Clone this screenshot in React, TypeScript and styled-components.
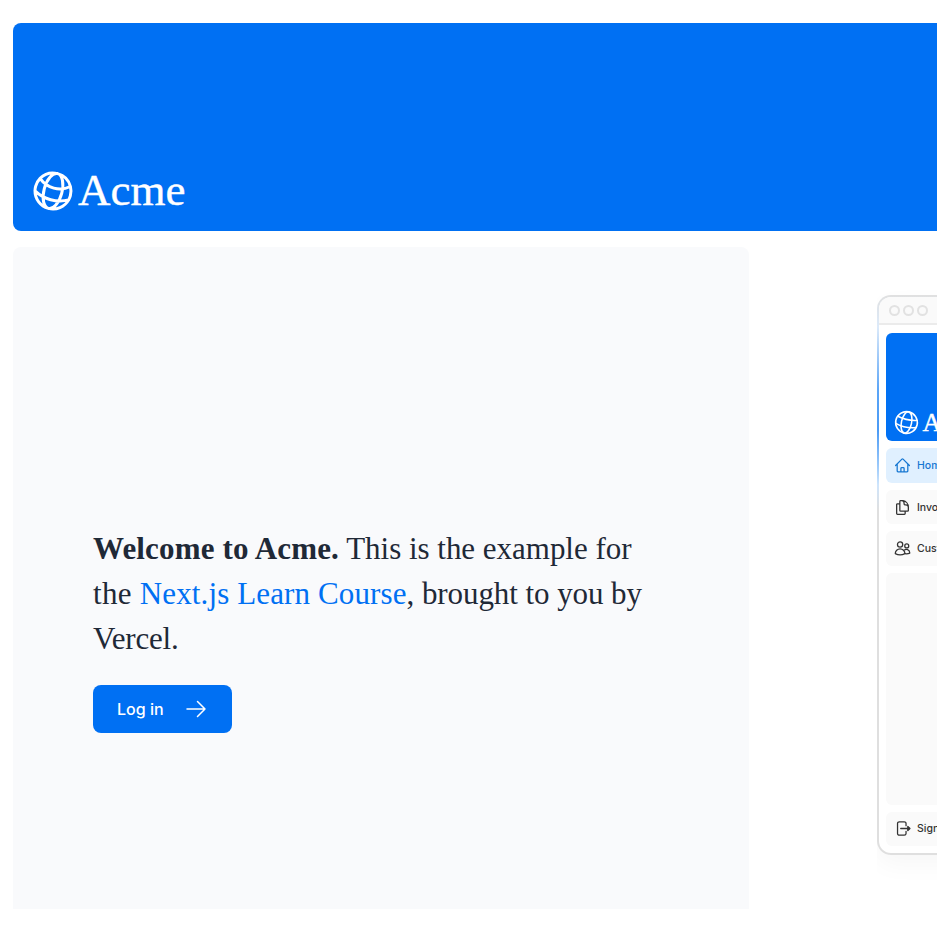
import React from 'react';
import styled, { createGlobalStyle } from 'styled-components';
import {
  HiOutlineGlobeAlt,
  HiOutlineArrowRight,
  HiOutlineHome,
  HiOutlineDocumentDuplicate,
} from 'react-icons/hi2';

const GlobalStyle = createGlobalStyle`
  *, *::before, *::after { box-sizing: border-box; }
  html, body { margin: 0; background: #fff; overflow: hidden; }
`;

const Page = styled.main`
  width: 937px;
  height: 937px;
  padding: 23px 0 28px 13px;
  display: flex;
  flex-direction: column;
  gap: 16px;
  overflow: hidden;
  font-family: Inter, sans-serif;
`;

const Header = styled.header`
  height: 208px;
  flex: none;
  padding: 16px;
  display: flex;
  align-items: flex-end;
  background: #0070f3;
  border-radius: 8px 0 0 8px;
`;

const Logo = styled.div`
  display: flex;
  align-items: center;
  color: #fff;
  line-height: 1;
`;

const Globe = styled(HiOutlineGlobeAlt)`
  width: 48px;
  height: 48px;
  flex: none;
  transform: rotate(15deg);
`;

const LogoName = styled.span<{ $size: number; $lift: number }>`
  padding: 0 0 ${(p) => p.$lift}px 1px;
  font-family: 'Liberation Serif', serif;
  font-size: ${(p) => p.$size}px;
  line-height: 1;
  -webkit-text-stroke: 0.4px currentColor;
`;

const Content = styled.div`
  flex: 1;
  min-height: 0;
  display: flex;
  overflow: hidden;
`;

const Intro = styled.section`
  width: 736px;
  flex: none;
  padding: 102px 80px 0;
  display: flex;
  flex-direction: column;
  justify-content: center;
  align-items: flex-start;
  gap: 24px;
  background: #f9fafc;
  border-radius: 8px 8px 0 0;
`;

const Welcome = styled.p`
  margin: 0;
  color: #1f2937;
  font-family: 'Liberation Serif', serif;
  font-size: 31px;
  line-height: 45px;
  white-space: nowrap;
`;

const Line = styled.span`
  display: block;
`;

const Run = styled.span<{ $spacing: number }>`
  letter-spacing: ${(p) => p.$spacing}px;
`;

const CourseLink = styled.a`
  color: #0070f3;
  letter-spacing: 0.12px;
`;

const LoginButton = styled.a`
  width: 139px;
  height: 48px;
  padding: 0 24px;
  display: flex;
  align-items: center;
  justify-content: space-between;
  border-radius: 8px;
  background: #0070f3;
  color: #fff;
  font-size: 16px;
  font-weight: 500;
  line-height: 24px;
`;

const Arrow = styled(HiOutlineArrowRight)`
  width: 24px;
  height: 24px;
`;

const Hero = styled.section`
  flex: 1;
  min-width: 0;
  margin-left: 128px;
  padding-top: 48px;
  overflow: hidden;
`;

/* Gradient edge of the browser mockup; the inner window leaves two pixels of it visible. */
const Mockup = styled.div`
  width: 600px;
  height: 560px;
  padding: 2px;
  border-radius: 14px;
  background: linear-gradient(#e0e0e0 0, #dceafa 32px, #5ba5f7 95px, #4a9af5 135px, #a5cffb 175px, #cfe5fc 190px, #dfdfdf 215px);
  box-shadow: 0 10px 24px rgba(0, 0, 0, 0.035);
`;

const Window = styled.div`
  height: 100%;
  display: flex;
  flex-direction: column;
  overflow: hidden;
  border-radius: 12px;
  background: #fff;
`;

const TitleBar = styled.div`
  height: 28px;
  flex: none;
  padding-left: 10px;
  display: flex;
  align-items: center;
  gap: 3px;
  border-bottom: 2px solid #ebebeb;
  background: #fafafa;
`;

const Dot = styled.span`
  width: 11px;
  height: 11px;
  border: 2px solid #e2e2e2;
  border-radius: 50%;
`;

const Sidebar = styled.div`
  flex: 1;
  padding: 8.4px 6px 7px 6.6px;
  display: flex;
  flex-direction: column;
  gap: 7px;
`;

const Brand = styled.div`
  height: 108px;
  flex: none;
  padding: 0 0 4px 6px;
  display: flex;
  align-items: flex-end;
  border-radius: 6px;
  background: #0070f3;
`;

const MiniLogo = styled(Logo)`
  gap: 1px;

  svg {
    width: 29px;
    height: 29px;
    flex: none;
  }
`;

const NavItem = styled.div<{ $active?: boolean }>`
  height: 34.5px;
  flex: none;
  padding-left: 8.2px;
  display: flex;
  align-items: center;
  gap: 6.2px;
  border-radius: 6px;
  background: ${(p) => (p.$active ? '#e0f0ff' : '#fafafa')};
  color: ${(p) => (p.$active ? '#1677d2' : '#333')};
  font-size: 10.5px;
  font-weight: 500;
  white-space: nowrap;

  svg {
    width: 17px;
    height: 17px;
    flex: none;
    stroke-width: 1.8;
  }
`;

const Filler = styled.div`
  flex: 1;
  border-radius: 6px;
  background: #fafafa;
`;

const MiniGlobe = () => (
  <svg viewBox="0 0 24 24" fill="none" stroke="currentColor" strokeWidth="1.3" strokeLinecap="round">
    <g transform="rotate(12 12 12)">
      <circle cx="12" cy="12" r="9" />
      <ellipse cx="12" cy="12" rx="4.2" ry="9" />
      <path d="M3.8 8.5c4.8 1.3 11.6 1.3 16.4 0" />
      <path d="M3.5 14.5c5 1.6 12 1.6 17 0" />
    </g>
  </svg>
);

const CustomersIcon = () => (
  <svg viewBox="0 0 24 24" fill="none" stroke="currentColor" strokeLinejoin="round">
    <circle cx="8.6" cy="6.4" r="3.7" />
    <circle cx="18" cy="8.3" r="2.8" />
    <path d="M1.8 19.2a6.8 6.8 0 0 1 13.6 0c-4 2.2-9.6 2.2-13.6 0Z" />
    <path d="M14.3 14.7c2.6-3 7.9-1.2 8 3.8-2 1-4.4 1.3-6.9.9" />
  </svg>
);

const SignOutIcon = () => (
  <svg viewBox="0 0 24 24" fill="none" stroke="currentColor" strokeLinecap="round" strokeLinejoin="round">
    <path d="M17 8V5a2.5 2.5 0 0 0-2.5-2.5h-7A2.5 2.5 0 0 0 5 5v14a2.5 2.5 0 0 0 2.5 2.5h7A2.5 2.5 0 0 0 17 19v-3" />
    <path d="M9.5 12h12" />
    <path d="m19.5 9 3 3-3 3Z" fill="currentColor" />
  </svg>
);

export default function App() {
  return (
    <Page>
      <GlobalStyle />
      <Header>
        <Logo>
          <Globe />
          <LogoName $size={45} $lift={2}>Acme</LogoName>
        </Logo>
      </Header>
      <Content>
        <Intro>
          <Welcome>
            <Line>
              <Run as="strong" $spacing={0.15}>Welcome to Acme.</Run>
              <Run $spacing={-0.02}> This is the example for</Run>
            </Line>
            <Line>
              <Run $spacing={0.3}>the </Run>
              <CourseLink>Next.js Learn Course</CourseLink>
              <Run $spacing={-0.07}>, brought to you by</Run>
            </Line>
            <Line>
              <Run $spacing={-0.2}>Vercel.</Run>
            </Line>
          </Welcome>
          <LoginButton>
            <span>Log in</span>
            <Arrow />
          </LoginButton>
        </Intro>
        <Hero>
          <Mockup>
            <Window>
              <TitleBar>
                <Dot />
                <Dot />
                <Dot />
              </TitleBar>
              <Sidebar>
                <Brand>
                  <MiniLogo>
                    <MiniGlobe />
                    <LogoName $size={26} $lift={0}>Acme</LogoName>
                  </MiniLogo>
                </Brand>
                <NavItem $active>
                  <HiOutlineHome />
                  Home
                </NavItem>
                <NavItem>
                  <HiOutlineDocumentDuplicate />
                  Invoices
                </NavItem>
                <NavItem>
                  <CustomersIcon />
                  Customers
                </NavItem>
                <Filler />
                <NavItem>
                  <SignOutIcon />
                  Sign Out
                </NavItem>
              </Sidebar>
            </Window>
          </Mockup>
        </Hero>
      </Content>
    </Page>
  );
}
